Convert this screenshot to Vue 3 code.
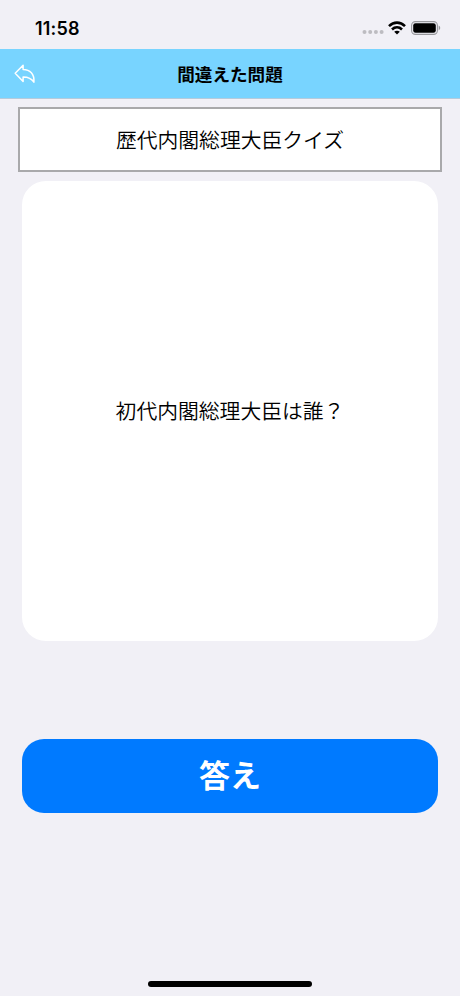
<script setup>
const heading = '歴代内閣総理大臣クイズ'
const question = '初代内閣総理大臣は誰？'
</script>

<template>
  <div class="screen">
    <header class="status">
      <span class="time">11:58</span>
      <div class="indicators">
        <svg class="dots" width="22" height="4" viewBox="0 0 22 4">
          <circle v-for="n in 4" :key="n" :cx="n * 5.7 - 3.2" cy="2" r="2" />
        </svg>
        <svg class="wifi" width="18" height="14" viewBox="0 0 18 14">
          <g fill="none" stroke="#000" stroke-width="2.6">
            <path d="M1 5.1C5.7.5 12.3.5 17 5.1" />
            <path d="M4 8.5c2.9-2.8 7.1-2.8 10 0" />
          </g>
          <path d="M9 13.6 6.2 10.8c1.6-1.5 4-1.5 5.6 0Z" />
        </svg>
        <svg class="battery" width="30" height="14" viewBox="0 0 30 14">
          <rect x=".6" y=".6" width="25.8" height="12.8" rx="3.8" fill="none" stroke="#98989c" stroke-width="1.1" />
          <rect x="2.2" y="2.2" width="22.6" height="9.6" rx="2.3" />
          <path d="M27.7 4.6c2 .9 2 3.9 0 4.8Z" fill="#98989c" />
        </svg>
      </div>
    </header>
    <nav class="navbar">
      <svg class="back" width="22" height="20" viewBox="0 0 22 20">
        <path d="M1.2 9.3 9.1 1.2v4.3C16 5.6 20.6 10 19.9 18.2 17.3 14.3 14 12.9 9.1 13v4.6Z" fill="none" stroke="#fff" stroke-width="1.5" stroke-linejoin="round" />
      </svg>
      <h1>間違えた問題</h1>
    </nav>
    <main>
      <div class="heading">{{ heading }}</div>
      <section class="card">{{ question }}</section>
      <button class="answer">答え</button>
    </main>
    <footer><div class="home"></div></footer>
  </div>
</template>

<style>
body { margin: 0; background: #f1f0f6; }
</style>

<style scoped>
.screen {
  width: 460px;
  height: 996px;
  display: flex;
  flex-direction: column;
  background: #f1f0f6;
  color: #000;
  font-family: "Noto Sans CJK JP", sans-serif;
}
.status {
  height: 49px;
  flex: none;
  box-sizing: border-box;
  padding: 7px 19px 0 35px;
  display: flex;
  justify-content: space-between;
  align-items: center;
}
.time { padding-top: 2px; font: 600 18px/22px Inter, sans-serif; letter-spacing: .15px; }
.indicators { display: flex; align-items: center; }
.dots { margin: 8px 4px 0 0; fill: #bdbcc1; }
.wifi { margin-right: 5px; }
.navbar {
  height: 50px;
  flex: none;
  box-sizing: border-box;
  border-bottom: 1px solid #b5cbdc;
  background: #78d4ff;
  display: grid;
  grid-template-columns: 60px 1fr 60px;
  align-items: center;
}
.back { margin-left: 14px; }
h1 { margin: 0; text-align: center; font-size: 17.6px; line-height: 26px; font-weight: 700; white-space: nowrap; }
main { flex: 1; padding: 8px 18px 0; display: flex; flex-direction: column; }
.heading {
  height: 65px;
  box-sizing: border-box;
  padding-bottom: 2px;
  border: 2px solid #a9a9ab;
  background: #fff;
  display: flex;
  align-items: center;
  justify-content: center;
  font-size: 20.8px;
  font-weight: 350;
}
.card {
  height: 460px;
  box-sizing: border-box;
  padding-bottom: 2px;
  margin: 9px 4px 0;
  border-radius: 24px;
  background: #fff;
  display: flex;
  align-items: center;
  justify-content: center;
  font-size: 20.8px;
  font-weight: 350;
}
.answer {
  height: 74px;
  margin: 98px 4px 0;
  padding: 0 0 4px;
  border: 0;
  border-radius: 22px;
  background: #007aff;
  color: #fff;
  font: 700 31px/46px "Noto Sans CJK JP", sans-serif;
}
footer { flex: none; display: flex; justify-content: center; padding-bottom: 9px; }
.home { width: 164px; height: 6px; border-radius: 3px; background: #000; }
</style>
